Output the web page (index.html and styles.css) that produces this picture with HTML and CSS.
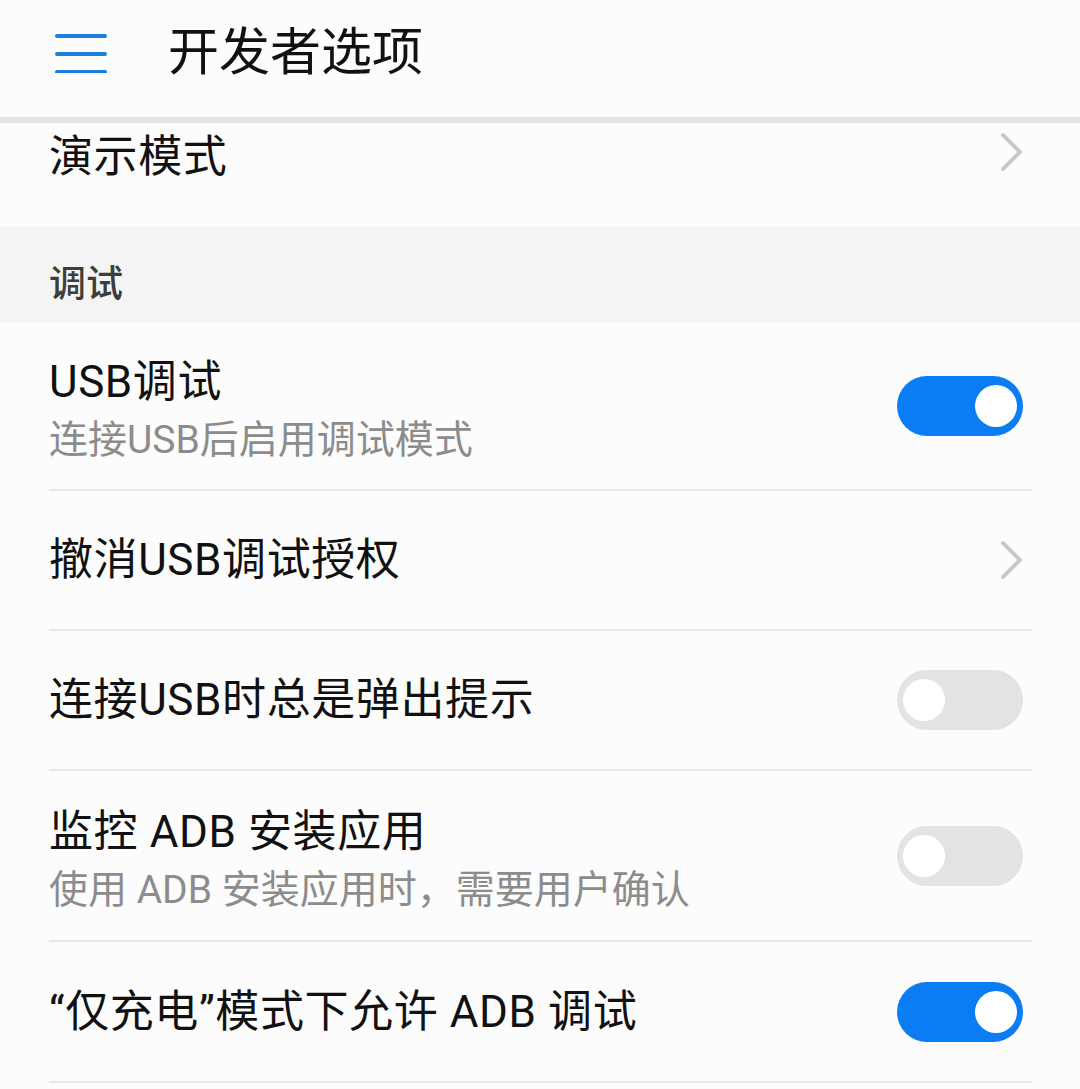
FILE: index.html
```html
<!DOCTYPE html>
<html lang="zh-CN">
<head>
    <meta charset="UTF-8">
    <meta name="viewport" content="width=device-width, initial-scale=1.0">
    <title>开发者选项</title>
    <link rel="stylesheet" href="styles.css">
</head>
<body>
    <header class="app-bar">
        <svg class="menu-icon" width="52" height="40" viewBox="0 0 52 40">
            <line x1="2" y1="3" x2="50" y2="3" />
            <line x1="2" y1="21" x2="50" y2="21" />
            <line x1="2" y1="39" x2="50" y2="39" />
        </svg>
        <h1>开发者选项</h1>
    </header>

    <main>
        <div class="row row-clipped">
            <div class="row-title">演示模式</div>
            <svg class="chevron" width="24" height="40" viewBox="0 0 24 40"><polyline points="3,3 20,20 3,37" /></svg>
        </div>

        <div class="section-head">调试</div>

        <div class="row row-double">
            <div class="row-text">
                <div class="row-title">USB调试</div>
                <div class="row-sub">连接USB后启用调试模式</div>
            </div>
            <span class="switch on"></span>
        </div>

        <div class="row">
            <div class="row-title">撤消USB调试授权</div>
            <svg class="chevron" width="24" height="40" viewBox="0 0 24 40"><polyline points="3,3 20,20 3,37" /></svg>
        </div>

        <div class="row">
            <div class="row-title">连接USB时总是弹出提示</div>
            <span class="switch"></span>
        </div>

        <div class="row row-double row-tall">
            <div class="row-text">
                <div class="row-title">监控 ADB 安装应用</div>
                <div class="row-sub">使用 ADB 安装应用时，需要用户确认</div>
            </div>
            <span class="switch"></span>
        </div>

        <div class="row">
            <div class="row-title">“仅充电”模式下允许 ADB 调试</div>
            <span class="switch on"></span>
        </div>
    </main>
</body>
</html>
```

FILE: styles.css
```css
:root {
    --accent: #0a7df5;
    --divider: #e6e6e6;
    --page-bg: #fcfcfc;
}

* {
    box-sizing: border-box;
}

body {
    margin: 0;
    background-color: var(--page-bg);
    font-family: Roboto, "Noto Sans CJK SC", sans-serif;
    color: #111;
    overflow: hidden;
}

.app-bar {
    display: flex;
    align-items: center;
    height: 123px;
    padding: 0 0 12px 55px;
    background-color: var(--page-bg);
    border-bottom: 6px solid #e4e4e4;
}

.menu-icon line {
    stroke: #1b7fdc;
    stroke-width: 4;
    stroke-linecap: round;
}

.app-bar h1 {
    margin: 0 0 0 61px;
    font-size: 51px;
    font-weight: 400;
    line-height: 60px;
    color: #111;
}

.row {
    display: flex;
    align-items: center;
    justify-content: space-between;
    height: 140px;
    margin: 0 48px 0 49px;
    border-bottom: 2px solid var(--divider);
}

.row:last-child {
    height: 141px;
}

.row-clipped {
    height: 103px;
    align-items: flex-start;
    padding-top: 9px;
    border-bottom: none;
}

.row-double {
    height: 169px;
}

.row-tall {
    height: 171px;
}

.row-text {
    padding-top: 10px;
}

.row-title {
    font-size: 44px;
    line-height: 50px;
    letter-spacing: 0.6px;
    color: #111;
}

.row-sub {
    margin-top: 8px;
    font-size: 39px;
    line-height: 50px;
    color: #8c8c8c;
}

.section-head {
    height: 96px;
    padding: 36px 0 0 49px;
    background-color: #f4f4f4;
    font-size: 37px;
    line-height: 46px;
    font-weight: 500;
    color: #3d3d3d;
}

.chevron {
    margin-right: 8px;
}

.chevron polyline {
    fill: none;
    stroke: #c8c8c8;
    stroke-width: 4;
    stroke-linecap: round;
    stroke-linejoin: round;
}

.switch {
    position: relative;
    flex-shrink: 0;
    width: 126px;
    height: 60px;
    margin-right: 9px;
    border-radius: 30px;
    background-color: #e3e3e3;
}

.switch::after {
    content: "";
    position: absolute;
    top: 9px;
    left: 6px;
    width: 42px;
    height: 42px;
    border-radius: 50%;
    background-color: #fff;
}

.switch.on {
    background-color: var(--accent);
}

.switch.on::after {
    left: auto;
    right: 6px;
}
```
